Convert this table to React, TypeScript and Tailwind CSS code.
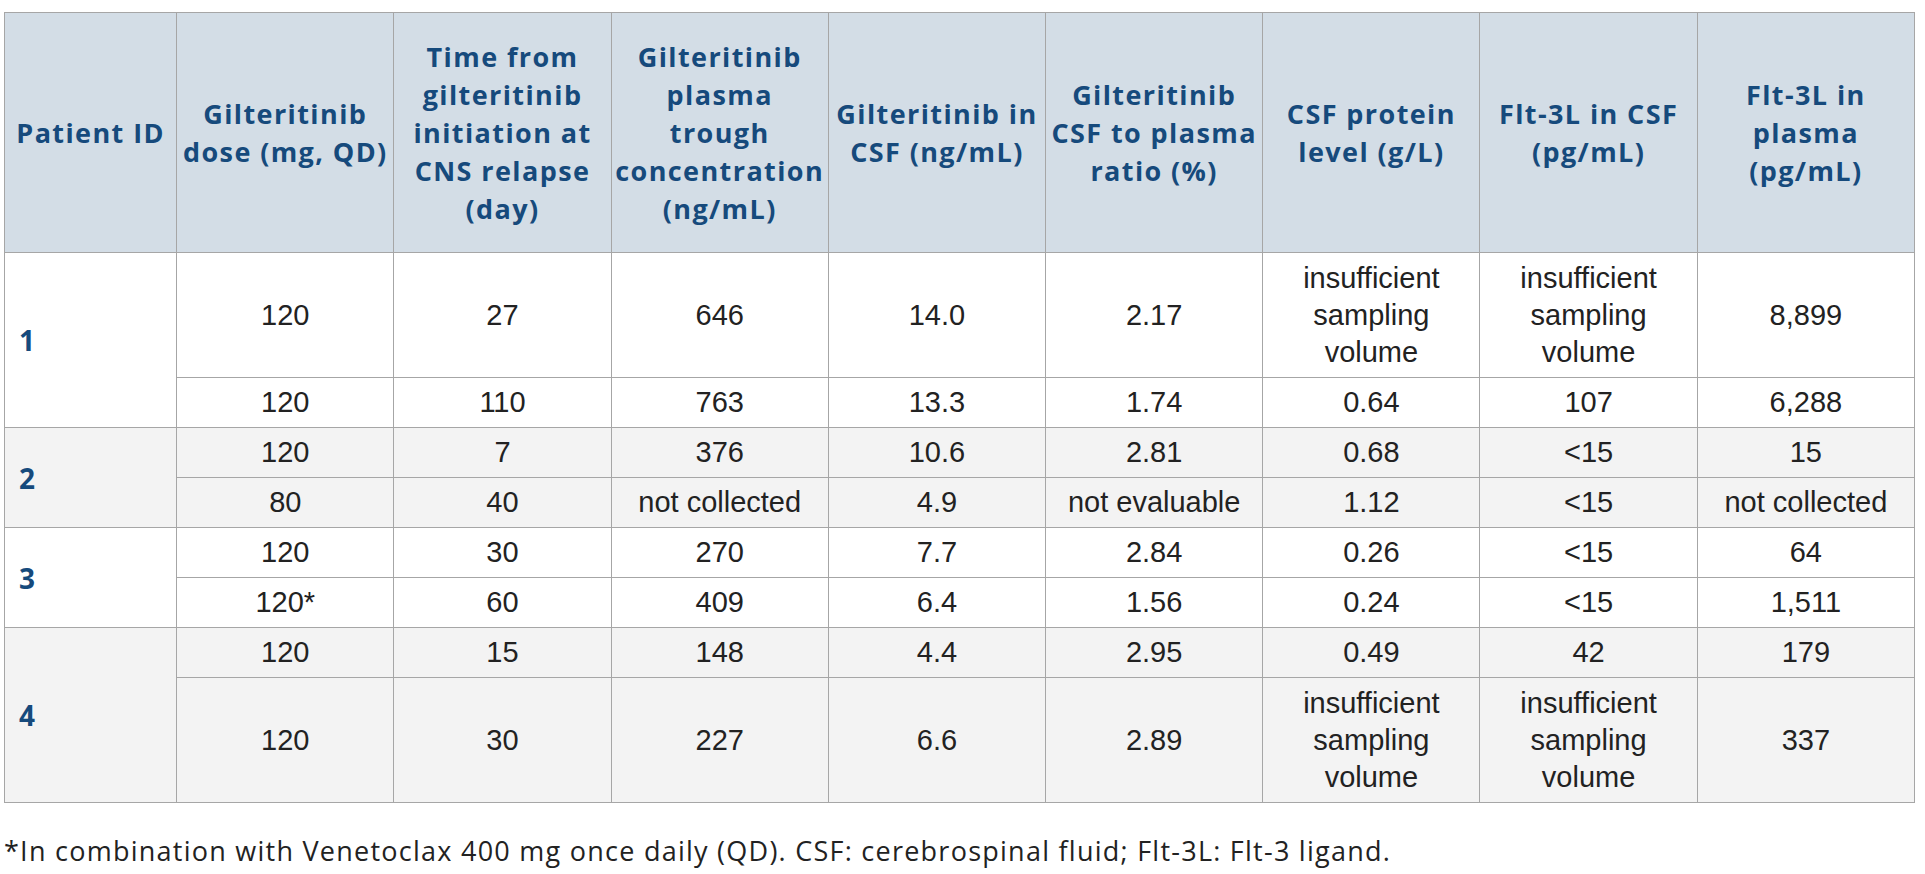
import React from "react"

// header text broken into lines exactly as in the printed table
const headers = [
  ["Patient ID"],
  ["Gilteritinib", "dose (mg, QD)"],
  ["Time from", "gilteritinib", "initiation at", "CNS relapse", "(day)"],
  ["Gilteritinib", "plasma", "trough", "concentration", "(ng/mL)"],
  ["Gilteritinib in", "CSF (ng/mL)"],
  ["Gilteritinib", "CSF to plasma", "ratio (%)"],
  ["CSF protein", "level (g/L)"],
  ["Flt-3L in CSF", "(pg/mL)"],
  ["Flt-3L in", "plasma", "(pg/mL)"],
]

const ISV = "insufficient sampling volume"

const patients = [
  {
    id: "1",
    shaded: false,
    rows: [
      { tall: true, cells: ["120", "27", "646", "14.0", "2.17", ISV, ISV, "8,899"] },
      { tall: false, cells: ["120", "110", "763", "13.3", "1.74", "0.64", "107", "6,288"] },
    ],
  },
  {
    id: "2",
    shaded: true,
    rows: [
      { tall: false, cells: ["120", "7", "376", "10.6", "2.81", "0.68", "<15", "15"] },
      { tall: false, cells: ["80", "40", "not collected", "4.9", "not evaluable", "1.12", "<15", "not collected"] },
    ],
  },
  {
    id: "3",
    shaded: false,
    rows: [
      { tall: false, cells: ["120", "30", "270", "7.7", "2.84", "0.26", "<15", "64"] },
      { tall: false, cells: ["120*", "60", "409", "6.4", "1.56", "0.24", "<15", "1,511"] },
    ],
  },
  {
    id: "4",
    shaded: true,
    rows: [
      { tall: false, cells: ["120", "15", "148", "4.4", "2.95", "0.49", "42", "179"] },
      { tall: true, cells: ["120", "30", "227", "6.6", "2.89", ISV, ISV, "337"] },
    ],
  },
]

export default function App() {
  return (
    <div className="min-h-screen bg-white pl-[4px] pt-[12px]">
      <table className="w-[1911px] table-fixed border-collapse">
        <colgroup>
          <col className="w-[172px]" />
          {headers.slice(1).map((h) => (
            <col key={h.join(" ")} className="w-[217px]" />
          ))}
        </colgroup>
        <thead>
          <tr className="h-[240px] bg-[#d3dde6]">
            {headers.map((lines) => (
              <th
                key={lines.join(" ")}
                className="border border-[#a6a6a6] px-0 text-center align-middle font-['Open_Sans',sans-serif] text-[27px] font-bold leading-[38px] tracking-[1.4px] whitespace-nowrap text-[#164a7c]"
              >
                {lines.map((l) => (
                  <div key={l}>{l}</div>
                ))}
              </th>
            ))}
          </tr>
        </thead>
        <tbody>
          {patients.map((p) =>
            p.rows.map((row, ri) => (
              <tr key={p.id + ri} className={`${row.tall ? "h-[125px]" : "h-[50px]"} ${p.shaded ? "bg-[#f3f3f3]" : "bg-white"}`}>
                {ri === 0 && (
                  <td
                    rowSpan={p.rows.length}
                    className="border border-[#a6a6a6] pl-[14px] text-left align-middle font-['Open_Sans',sans-serif] text-[28px] font-bold text-[#164a7c]"
                  >
                    {p.id}
                  </td>
                )}
                {row.cells.map((c, ci) => (
                  <td
                    key={ci}
                    className="border border-[#a6a6a6] px-2 text-center align-middle font-['Liberation_Sans',Arial,sans-serif] text-[29px] leading-[37px] text-[#222222]"
                  >
                    {c === ISV ? (
                      <>
                        insufficient
                        <br />
                        sampling
                        <br />
                        volume
                      </>
                    ) : (
                      c
                    )}
                  </td>
                ))}
              </tr>
            ))
          )}
        </tbody>
      </table>
      <p className="mt-[28px] font-['Open_Sans',sans-serif] text-[27px] tracking-[1.25px] text-[#222222]">
        *In combination with Venetoclax 400 mg once daily (QD). CSF: cerebrospinal fluid; Flt-3L: Flt-3 ligand.
      </p>
    </div>
  )
}
